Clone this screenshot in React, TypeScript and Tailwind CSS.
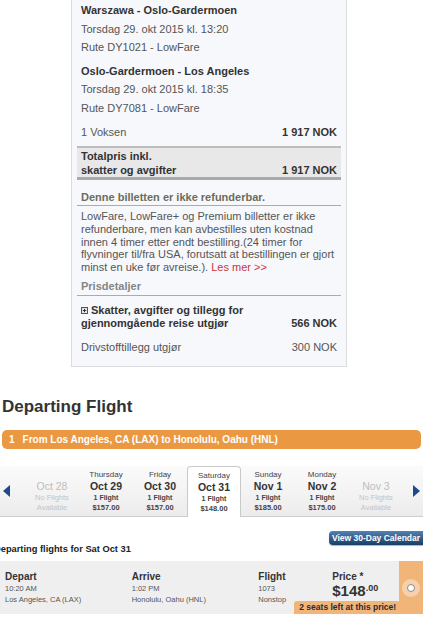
import React from "react";

type Day = {
  name?: string;
  date: string;
  flights?: string;
  price?: string;
  selected?: boolean;
};

const days: Day[] = [
  { date: "Oct 28" },
  { name: "Thursday", date: "Oct 29", flights: "1 Flight", price: "$157.00" },
  { name: "Friday", date: "Oct 30", flights: "1 Flight", price: "$157.00" },
  { name: "Saturday", date: "Oct 31", flights: "1 Flight", price: "$148.00", selected: true },
  { name: "Sunday", date: "Nov 1", flights: "1 Flight", price: "$185.00" },
  { name: "Monday", date: "Nov 2", flights: "1 Flight", price: "$175.00" },
  { date: "Nov 3" },
];

function DayCell({ d }: { d: Day }) {
  const available = !!d.flights;
  return (
    <div
      className={
        "w-[54px] shrink-0 flex flex-col items-center pt-[4px] text-center " +
        (d.selected
          ? "bg-white border-x border-t border-[#c9c9c9] rounded-t-[4px] -mb-px"
          : "")
      }
    >
      <div className="h-[10px] leading-[10px] text-[8px] text-[#444]">{d.name ?? ""}</div>
      <div
        className={
          "leading-[13px] text-[10.5px] " +
          (available ? "font-bold text-[#333]" : "text-[#bdbdbd]")
        }
      >
        {d.date}
      </div>
      {available ? (
        <>
          <div className="leading-[10px] text-[7px] font-bold text-[#444]">{d.flights}</div>
          <div className="leading-[9px] text-[7.5px] font-bold text-[#444]">{d.price}</div>
        </>
      ) : (
        <>
          <div className="leading-[10px] text-[7.5px] text-[#c4c4c4]">No Flights</div>
          <div className="leading-[9px] text-[7.5px] text-[#c4c4c4]">Available</div>
        </>
      )}
    </div>
  );
}

function PlusBox() {
  return (
    <svg width="7" height="7" viewBox="0 0 7 7" className="mr-[3px] inline-block align-[-0px]">
      <rect x="0.5" y="0.5" width="6" height="6" fill="#e6e6e6" stroke="#555" strokeWidth="1" />
      <path d="M3.5 1.8V5.2M1.8 3.5H5.2" stroke="#333" strokeWidth="1" />
    </svg>
  );
}

export default function App() {
  return (
    <div className="w-[423px] h-[620px] overflow-hidden bg-white font-['Liberation_Sans',Arial,sans-serif]">
      {/* Booking summary card */}
      <div className="ml-[71px] w-[276px] border-x border-b border-[#dcdcdc] bg-[#f7f8fc] px-[5px] pt-px pb-[10px] text-[11px] text-[#555]">
        <div className="px-[4px] leading-[18.5px]">
          <div className="font-bold text-[#333]">Warszawa - Oslo-Gardermoen</div>
          <div>Torsdag 29. okt 2015 kl. 13:20</div>
          <div>Rute DY1021 - LowFare</div>
        </div>
        <div className="mt-[5px] px-[4px] leading-[18.5px]">
          <div className="font-bold text-[#333]">Oslo-Gardermoen - Los Angeles</div>
          <div>Torsdag 29. okt 2015 kl. 18:35</div>
          <div>Rute DY7081 - LowFare</div>
        </div>
        <div className="mt-[6px] flex justify-between px-[4px] leading-[18.5px]">
          <span>1 Voksen</span>
          <span className="font-bold text-[#333]">1 917 NOK</span>
        </div>
        <div className="mt-[4.5px] border-t-2 border-b-[3px] border-t-[#bdbdbd] border-b-[#a9a9a9] border-b-double bg-[#e8e8e8] px-[4px] pt-px leading-[14px] font-bold text-[#333]">
          <div>Totalpris inkl.</div>
          <div className="flex justify-between">
            <span>skatter og avgifter</span>
            <span>1 917 NOK</span>
          </div>
        </div>
        <div className="mt-[10px] border-b border-[#ababab] px-[4px] pb-px leading-[14px] font-bold text-[#6c6c5c]">
          Denne billetten er ikke refunderbar.
        </div>
        <p className="pl-[4px] pr-[3px] pt-[4px] leading-[12.75px]">
          LowFare, LowFare+ og Premium billetter er ikke refunderbare, men kan avbestilles uten kostnad
          innen 4 timer etter endt bestilling.(24 timer for flyvninger til/fra USA, forutsatt at
          bestillingen er gjort minst en uke før avreise.).{" "}
          <span className="text-[#c8363e]">Les mer &gt;&gt;</span>
        </p>
        <div className="mt-[5px] border-b border-[#ababab] px-[4px] pb-[2px] leading-[14px] font-bold text-[#858585]">
          Prisdetaljer
        </div>
        <div className="flex items-end justify-between px-[4px] pt-[8px] leading-[13px] font-bold text-[#333]">
          <div>
            <div className="flex items-center">
              <PlusBox />
              <span>Skatter, avgifter og tillegg for</span>
            </div>
            <div>gjennomgående reise utgjør</div>
          </div>
          <span>566 NOK</span>
        </div>
        <div className="mt-[8px] flex justify-between px-[4px] leading-[18.5px]">
          <span>Drivstofftillegg utgjør</span>
          <span>300 NOK</span>
        </div>
      </div>

      {/* Flight search results */}
      <h1 className="mt-[30px] pl-[2px] text-[17px] font-bold leading-[20px] text-[#333]">
        Departing Flight
      </h1>
      <div className="mx-[2px] mt-[13px] flex h-[19px] items-center rounded-[5px] bg-[#ea9841] pl-[7px] text-[10px] font-bold text-white">
        <span>1</span>
        <span className="ml-[8px]">From Los Angeles, CA (LAX) to Honolulu, Oahu (HNL)</span>
      </div>

      <div className="mt-[17px] flex h-[51px] items-stretch border-b border-[#cdcdcd] bg-linear-to-b from-[#fbfbfb] to-[#ececec]">
        <div className="flex w-[25px] shrink-0 items-center pl-[3px]">
          <svg width="7" height="12" viewBox="0 0 7 12">
            <path d="M7 0V12L0 6Z" fill="#1e4a8c" />
          </svg>
        </div>
        {days.map((d) => (
          <DayCell key={d.date} d={d} />
        ))}
        <div className="flex flex-1 items-center justify-end pr-[3px]">
          <svg width="7" height="12" viewBox="0 0 7 12">
            <path d="M0 0V12L7 6Z" fill="#1e4a8c" />
          </svg>
        </div>
      </div>

      <div className="mt-[14px] flex justify-end">
        <div className="flex h-[14px] w-[94px] items-center justify-center rounded-l-[4px] bg-linear-to-b from-[#5383b3] to-[#1a3d69] text-[8.5px] font-bold text-white shadow-[0_1px_1px_rgba(0,0,0,0.3)]">
          View 30-Day Calendar
        </div>
      </div>
      <div className="-mt-px -ml-[6px] text-[9.3px] font-bold leading-[10px] text-[#222]">
        Departing flights for Sat Oct 31
      </div>

      <div className="mt-[7px] flex h-[53px]">
        <div className="flex flex-1 bg-[#efefef] pl-[5px] text-[#555]">
          <div className="w-[126.7px] shrink-0 pt-[10px]">
            <div className="text-[10px] font-bold leading-[12px] text-[#333]">Depart</div>
            <div className="text-[7.5px] leading-[11px]">10:20 AM</div>
            <div className="text-[7.5px] leading-[11px]">Los Angeles, CA (LAX)</div>
          </div>
          <div className="w-[126.6px] shrink-0 pt-[10px]">
            <div className="text-[10px] font-bold leading-[12px] text-[#333]">Arrive</div>
            <div className="text-[7.5px] leading-[11px]">1:02 PM</div>
            <div className="text-[7.5px] leading-[11px]">Honolulu, Oahu (HNL)</div>
          </div>
          <div className="w-[36px] shrink-0 pt-[10px]">
            <div className="text-[10px] font-bold leading-[12px] text-[#333]">Flight</div>
            <div className="text-[7.5px] leading-[11px]">1073</div>
            <div className="text-[7.5px] leading-[11px]">Nonstop</div>
          </div>
          <div className="flex flex-1 flex-col pt-[10px]">
            <div className="pl-[38px] text-[10px] font-bold leading-[12px] text-[#333]">Price *</div>
            <div className="flex items-start pl-[38px] leading-[16px] text-[#333]">
              <span className="text-[15px] font-bold">$148</span>
              <span className="mt-[1px] text-[9px] font-bold leading-[9px]">.00</span>
            </div>
            <div className="mt-auto flex h-[13px] items-center rounded-tl-[3px] bg-[#f1b579] pl-[5px] text-[8.5px] font-bold text-[#2a2a35]">
              2 seats left at this price!
            </div>
          </div>
        </div>
        <div className="flex w-[24px] items-center justify-center bg-[#f1b579]">
          <div className="flex h-[18px] w-[18px] items-center justify-center rounded-full bg-[#f6d1ab]">
            <div className="h-[8px] w-[8px] rounded-full border border-[#8a8a8a] bg-white" />
          </div>
        </div>
      </div>
    </div>
  );
}
